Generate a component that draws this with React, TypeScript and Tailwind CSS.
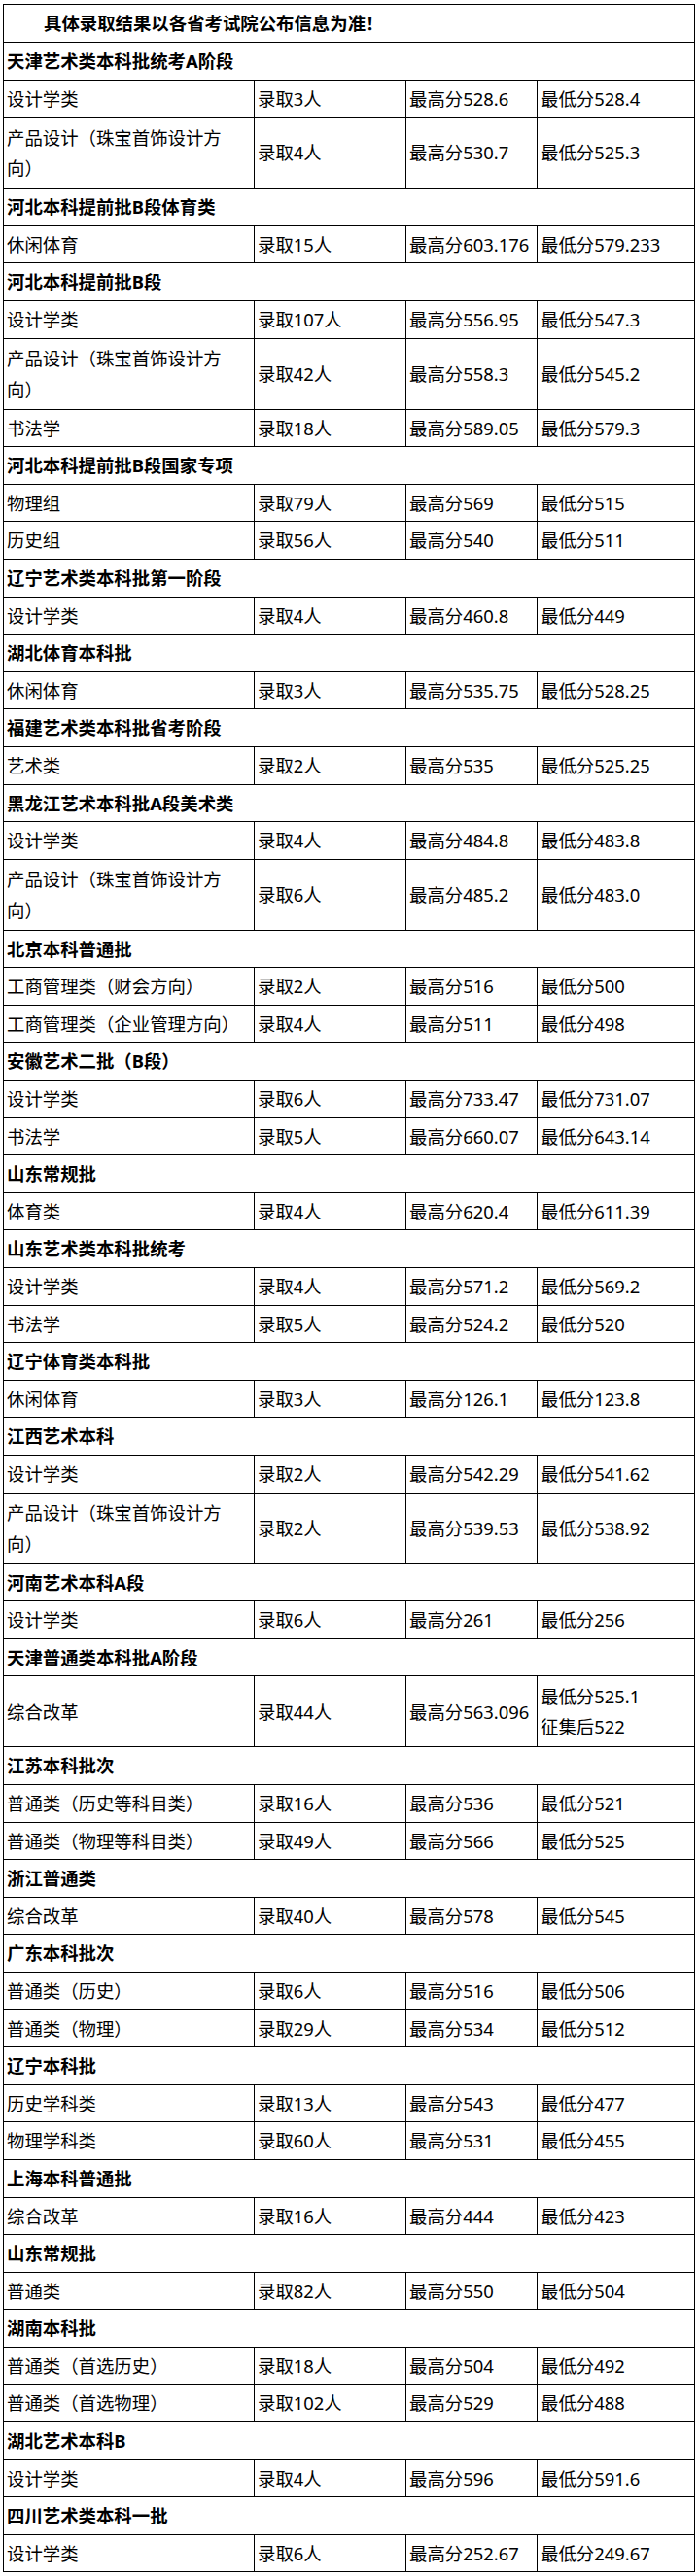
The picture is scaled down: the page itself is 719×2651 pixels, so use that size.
import React from "react";

type Row = [React.ReactNode, string, string, React.ReactNode, boolean?];
type Section = { title: string; rows: Row[] };

const PD = "产品设计（珠宝首饰设计方向）";

const sections: Section[] = [
  {
    title: "天津艺术类本科批统考A阶段",
    rows: [
      ["设计学类", "录取3人", "最高分528.6", "最低分528.4"],
      [PD, "录取4人", "最高分530.7", "最低分525.3", true],
    ],
  },
  {
    title: "河北本科提前批B段体育类",
    rows: [["休闲体育", "录取15人", "最高分603.176", "最低分579.233"]],
  },
  {
    title: "河北本科提前批B段",
    rows: [
      ["设计学类", "录取107人", "最高分556.95", "最低分547.3"],
      [PD, "录取42人", "最高分558.3", "最低分545.2", true],
      ["书法学", "录取18人", "最高分589.05", "最低分579.3"],
    ],
  },
  {
    title: "河北本科提前批B段国家专项",
    rows: [
      ["物理组", "录取79人", "最高分569", "最低分515"],
      ["历史组", "录取56人", "最高分540", "最低分511"],
    ],
  },
  {
    title: "辽宁艺术类本科批第一阶段",
    rows: [["设计学类", "录取4人", "最高分460.8", "最低分449"]],
  },
  {
    title: "湖北体育本科批",
    rows: [["休闲体育", "录取3人", "最高分535.75", "最低分528.25"]],
  },
  {
    title: "福建艺术类本科批省考阶段",
    rows: [["艺术类", "录取2人", "最高分535", "最低分525.25"]],
  },
  {
    title: "黑龙江艺术本科批A段美术类",
    rows: [
      ["设计学类", "录取4人", "最高分484.8", "最低分483.8"],
      [PD, "录取6人", "最高分485.2", "最低分483.0", true],
    ],
  },
  {
    title: "北京本科普通批",
    rows: [
      ["工商管理类（财会方向）", "录取2人", "最高分516", "最低分500"],
      ["工商管理类（企业管理方向）", "录取4人", "最高分511", "最低分498"],
    ],
  },
  {
    title: "安徽艺术二批（B段）",
    rows: [
      ["设计学类", "录取6人", "最高分733.47", "最低分731.07"],
      ["书法学", "录取5人", "最高分660.07", "最低分643.14"],
    ],
  },
  {
    title: "山东常规批",
    rows: [["体育类", "录取4人", "最高分620.4", "最低分611.39"]],
  },
  {
    title: "山东艺术类本科批统考",
    rows: [
      ["设计学类", "录取4人", "最高分571.2", "最低分569.2"],
      ["书法学", "录取5人", "最高分524.2", "最低分520"],
    ],
  },
  {
    title: "辽宁体育类本科批",
    rows: [["休闲体育", "录取3人", "最高分126.1", "最低分123.8"]],
  },
  {
    title: "江西艺术本科",
    rows: [
      ["设计学类", "录取2人", "最高分542.29", "最低分541.62"],
      [PD, "录取2人", "最高分539.53", "最低分538.92", true],
    ],
  },
  {
    title: "河南艺术本科A段",
    rows: [["设计学类", "录取6人", "最高分261", "最低分256"]],
  },
  {
    title: "天津普通类本科批A阶段",
    rows: [
      [
        "综合改革",
        "录取44人",
        "最高分563.096",
        <>
          最低分525.1
          <br />
          征集后522
        </>,
        true,
      ],
    ],
  },
  {
    title: "江苏本科批次",
    rows: [
      ["普通类（历史等科目类）", "录取16人", "最高分536", "最低分521"],
      ["普通类（物理等科目类）", "录取49人", "最高分566", "最低分525"],
    ],
  },
  {
    title: "浙江普通类",
    rows: [["综合改革", "录取40人", "最高分578", "最低分545"]],
  },
  {
    title: "广东本科批次",
    rows: [
      ["普通类（历史）", "录取6人", "最高分516", "最低分506"],
      ["普通类（物理）", "录取29人", "最高分534", "最低分512"],
    ],
  },
  {
    title: "辽宁本科批",
    rows: [
      ["历史学科类", "录取13人", "最高分543", "最低分477"],
      ["物理学科类", "录取60人", "最高分531", "最低分455"],
    ],
  },
  {
    title: "上海本科普通批",
    rows: [["综合改革", "录取16人", "最高分444", "最低分423"]],
  },
  {
    title: "山东常规批",
    rows: [["普通类", "录取82人", "最高分550", "最低分504"]],
  },
  {
    title: "湖南本科批",
    rows: [
      ["普通类（首选历史）", "录取18人", "最高分504", "最低分492"],
      ["普通类（首选物理）", "录取102人", "最高分529", "最低分488"],
    ],
  },
  {
    title: "湖北艺术本科B",
    rows: [["设计学类", "录取4人", "最高分596", "最低分591.6"]],
  },
  {
    title: "四川艺术类本科一批",
    rows: [["设计学类", "录取6人", "最高分252.67", "最低分249.67"]],
  },
];

const td =
  "border border-black pl-[3px] pr-[3px] py-[3px] align-middle text-left font-normal";

export default function App() {
  return (
    <div
      className="bg-white text-black text-[18.4px] leading-[31.6px] pt-[4px] pl-[3px] pb-[9px] [text-spacing-trim:space-all]"
      style={{
        fontFamily:
          '"Noto Sans", "Noto Sans CJK SC", "Microsoft YaHei", sans-serif',
      }}
    >
      <table className="border-collapse w-[711px] table-fixed">
        <colgroup>
          <col className="w-[258px]" />
          <col className="w-[156px]" />
          <col className="w-[135px]" />
          <col className="w-[162px]" />
        </colgroup>
        <tbody>
          <tr className="h-[39px]">
            <td colSpan={4} className={`${td} font-bold pl-[41px]`}>
              <span className="font-bold">具体录取结果以各省考试院公布信息为准！</span>
            </td>
          </tr>
          {sections.map((s, si) => (
            <React.Fragment key={si}>
              <tr className="h-[38.5px]">
                <td colSpan={4} className={td}>
                  <span className="font-bold">{s.title}</span>
                </td>
              </tr>
              {s.rows.map((r, ri) => (
                <tr key={ri} className={r[4] ? "h-[73px]" : "h-[38.5px]"}>
                  <td className={td}>{r[0]}</td>
                  <td className={td}>{r[1]}</td>
                  <td className={td}>{r[2]}</td>
                  <td className={td}>{r[3]}</td>
                </tr>
              ))}
            </React.Fragment>
          ))}
        </tbody>
      </table>
    </div>
  );
}
